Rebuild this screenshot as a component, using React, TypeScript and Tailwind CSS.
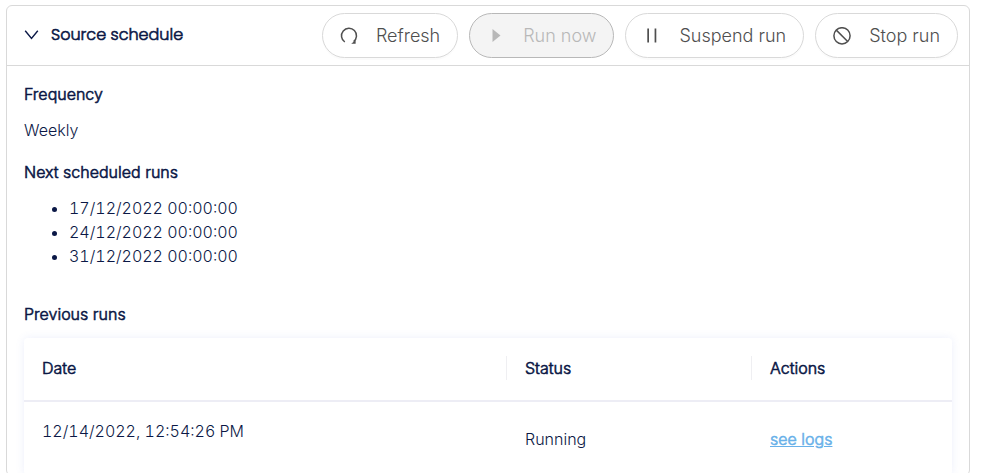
import type { ReactNode } from "react";

type RunAction = { label: string; icon: ReactNode; disabled?: boolean };

const actions: RunAction[] = [
  {
    label: "Refresh",
    icon: (
      <svg viewBox="0 0 18 18" className="size-[18px]" fill="none" stroke="currentColor" strokeWidth="1.5" aria-hidden="true">
        <path d="M4.8 15A7.5 7.5 0 1 1 13.6 14.7" />
        <path d="M11.2 16.8h4.4v-3.6z" fill="currentColor" stroke="none" />
      </svg>
    ),
  },
  {
    label: "Run now",
    disabled: true,
    icon: (
      <svg viewBox="0 0 18 18" className="size-[18px]" fill="currentColor" aria-hidden="true">
        <path d="M5.5 2 13.5 8.5 5.5 15z" />
      </svg>
    ),
  },
  {
    label: "Suspend run",
    icon: (
      <svg viewBox="0 0 18 18" className="size-[18px]" fill="currentColor" aria-hidden="true">
        <path d="M4.3 1.5H6v14H4.3zM11.6 1.5h1.7v14h-1.7z" />
      </svg>
    ),
  },
  {
    label: "Stop run",
    icon: (
      <svg viewBox="0 0 18 18" className="size-[18px]" fill="none" stroke="currentColor" strokeWidth="1.5" aria-hidden="true">
        <circle cx="9" cy="8.8" r="8.1" />
        <path d="m3.3 3.1 11.4 11.4" />
      </svg>
    ),
  },
];

const nextRuns = ["17/12/2022 00:00:00", "24/12/2022 00:00:00", "31/12/2022 00:00:00"];
const previousRuns = [{ date: "12/14/2022, 12:54:26 PM", status: "Running" }];

const strong = "font-light [-webkit-text-stroke:0.6px]";

function ActionButton({ label, icon, disabled }: RunAction) {
  return (
    <button
      type="button"
      disabled={disabled}
      className="flex h-[45px] items-center gap-[18px] rounded-full border border-[#d9d9d9] bg-white px-[17px] text-lg font-light text-[#4f4f4f] shadow-[0_2px_0_rgba(0,0,0,0.015)] disabled:border-[#b8b8b8] disabled:bg-[#f4f4f4] disabled:text-[#b8b8b8] disabled:shadow-none"
    >
      {icon}
      <span>{label}</span>
    </button>
  );
}

export default function App() {
  return (
    <main className="h-screen overflow-hidden bg-white pt-[5px] pr-[37px] pl-[6px] font-['Inter',sans-serif] text-base leading-6 font-light text-[#0b1846]">
      <section className="min-h-full rounded-md border border-[#d9d9d9]">
        <header className="flex h-[60px] items-center justify-between border-b border-[#d9d9d9] pr-[11px] pl-[17px]">
          <button type="button" aria-expanded="true" className={`flex items-center gap-3 pb-0.5 font-['Poppins','Inter',sans-serif] ${strong}`}>
            <svg viewBox="0 0 15 10" className="h-[10px] w-[15px]" fill="none" stroke="currentColor" strokeWidth="1.4" aria-hidden="true">
              <path d="m1.2.8 6.3 7.7L13.8.8" />
            </svg>
            Source schedule
          </button>
          <div className="flex gap-[11px]">
            {actions.map((action) => (
              <ActionButton key={action.label} {...action} />
            ))}
          </div>
        </header>

        <div className="px-[17px] pt-4">
          <h2 className={strong}>Frequency</h2>
          <p className="mt-3">Weekly</p>
          <h2 className={`mt-[18px] ${strong}`}>Next scheduled runs</h2>
          <ul className="mt-3 list-disc pl-[45px] tabular-nums">
            {nextRuns.map((run) => (
              <li key={run}>{run}</li>
            ))}
          </ul>
          <h2 className={`mt-[34px] ${strong}`}>Previous runs</h2>
          <div className="mt-3 rounded-sm shadow-[0_0_8px_rgba(100,120,220,0.12)]">
            <table className="w-full table-fixed text-left">
              <colgroup>
                <col />
                <col className="w-[245px]" />
                <col className="w-[201px]" />
              </colgroup>
              <thead>
                <tr className="h-[63px] border-b-2 border-[#ededf5]">
                  <th className={`px-[18px] pb-0.5 ${strong}`}>Date</th>
                  <th className={`pb-0.5 ${strong}`}>
                    <div className="border-l border-[#efeff2] pl-[18px]">Status</div>
                  </th>
                  <th className={`pb-0.5 ${strong}`}>
                    <div className="border-l border-[#efeff2] pl-[18px]">Actions</div>
                  </th>
                </tr>
              </thead>
              <tbody>
                {previousRuns.map((run) => (
                  <tr key={run.date} className="h-[74px]">
                    <td className="px-[18px] pb-4 tabular-nums">{run.date}</td>
                    <td className="px-[19px]">{run.status}</td>
                    <td className="px-[19px]">
                      <a href="#logs" className={`text-[#69b1e9] underline ${strong}`}>see logs</a>
                    </td>
                  </tr>
                ))}
              </tbody>
            </table>
          </div>
        </div>
      </section>
    </main>
  );
}
